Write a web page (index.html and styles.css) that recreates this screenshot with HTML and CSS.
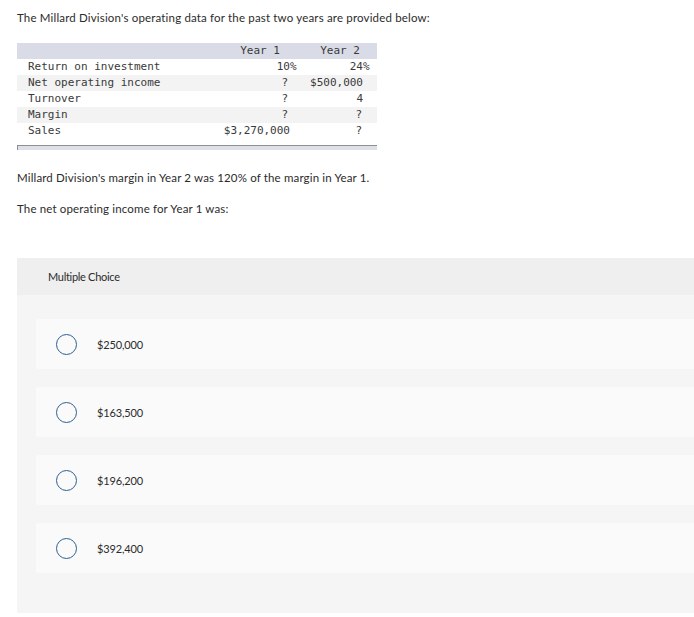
FILE: index.html
```html
<!DOCTYPE html>
<html>
<head>
<meta charset="utf-8">
<link rel="stylesheet" href="styles.css">
</head>
<body>
<div class="page">
  <p class="intro">The Millard Division's operating data for the past two years are provided below:</p>
  <div class="data">
    <div class="row head">
      <span class="lbl"></span><span class="c1 h">Year 1</span><span class="c2 h">Year 2</span>
    </div>
    <div class="row">
      <span class="lbl">Return on investment</span><span class="c1">10<span class="pct">%</span></span><span class="c2">24<span class="pct">%</span></span>
    </div>
    <div class="row alt">
      <span class="lbl">Net operating income</span><span class="c1 q">?</span><span class="c2">$500,000</span>
    </div>
    <div class="row">
      <span class="lbl">Turnover</span><span class="c1 q">?</span><span class="c2">4</span>
    </div>
    <div class="row alt">
      <span class="lbl">Margin</span><span class="c1 q">?</span><span class="c2 q">?</span>
    </div>
    <div class="row">
      <span class="lbl">Sales</span><span class="c1">$3,270,000</span><span class="c2 q">?</span>
    </div>
    <div class="foot"></div>
  </div>
  <p class="text t1">Millard Division's margin in Year 2 was 120% of the margin in Year 1.</p>
  <p class="text t2">The net operating income for Year 1 was:</p>

  <div class="mc">
    <div class="mc-head">Multiple Choice</div>
    <div class="mc-body">
      <div class="opt"><span class="radio"></span><span class="opt-text">$250,000</span></div>
      <div class="opt"><span class="radio"></span><span class="opt-text">$163,500</span></div>
      <div class="opt"><span class="radio"></span><span class="opt-text">$196,200</span></div>
      <div class="opt"><span class="radio"></span><span class="opt-text">$392,400</span></div>
    </div>
  </div>
</div>
</body>
</html>
```
FILE: styles.css
```css
html, body {
  margin: 0;
  padding: 0;
  background: #ffffff;
}
.page {
  padding: 0 0 0 17px;
  font-family: Lato, "Open Sans", sans-serif;
  color: #2b2b2b;
}
.intro {
  margin: 0;
  padding-top: 11px;
  font-size: 11.5px;
  line-height: 14px;
  letter-spacing: 0.17px;
}
.data {
  margin-top: 18px;
  width: 360px;
  font-family: "DejaVu Sans Mono", "Liberation Mono", monospace;
  font-size: 11px;
  color: #3a3a3a;
}
.row {
  display: grid;
  grid-template-columns: 1fr 75px 80px;
  height: 16px;
  line-height: 16px;
  white-space: pre;
}
.row.head {
  background: #d9dce6;
}
.row.alt {
  background: #f3f3f3;
}
.lbl {
  padding-left: 11px;
}
.c1, .c2 {
  text-align: right;
}
.c1 {
  padding-right: 7px;
}
.c2 {
  padding-right: 14px;
}
.c1.q {
  padding-right: 9px;
}
.c2.q {
  padding-right: 15px;
}
.c1.h, .c2.h {
  padding-right: 17px;
}
.pct {
  margin-right: -6.6px;
}
.foot {
  margin-top: 6px;
  height: 4px;
  border-top: 1px solid #8e8e8e;
  border-left: 1px solid #8e8e8e;
  background: #dde0e8;
}
.text {
  margin: 0;
  font-size: 11.5px;
  line-height: 14px;
  letter-spacing: 0.15px;
}
.t1 {
  margin-top: 21px;
}
.t2 {
  margin-top: 17px;
}
.mc {
  margin-top: 42px;
  background: #f5f5f5;
}
.mc-head {
  background: #efefef;
  height: 37px;
  display: flex;
  align-items: center;
  padding-left: 31px;
  font-size: 11px;
  letter-spacing: -0.3px;
  color: #2b2b2b;
}
.mc-body {
  display: flex;
  flex-direction: column;
  gap: 18px;
  padding: 24px 0 40px 19px;
}
.opt {
  height: 50px;
  background: #fafafa;
  border-radius: 2px 0 0 2px;
  display: flex;
  align-items: center;
  padding-left: 20px;
}
.radio {
  width: 19px;
  height: 19px;
  border: 1.5px solid #2d5f92;
  border-radius: 50%;
  flex: none;
}
.opt-text {
  margin-left: 20px;
  font-size: 11px;
  letter-spacing: -0.15px;
  color: #2b2b2b;
}
```
